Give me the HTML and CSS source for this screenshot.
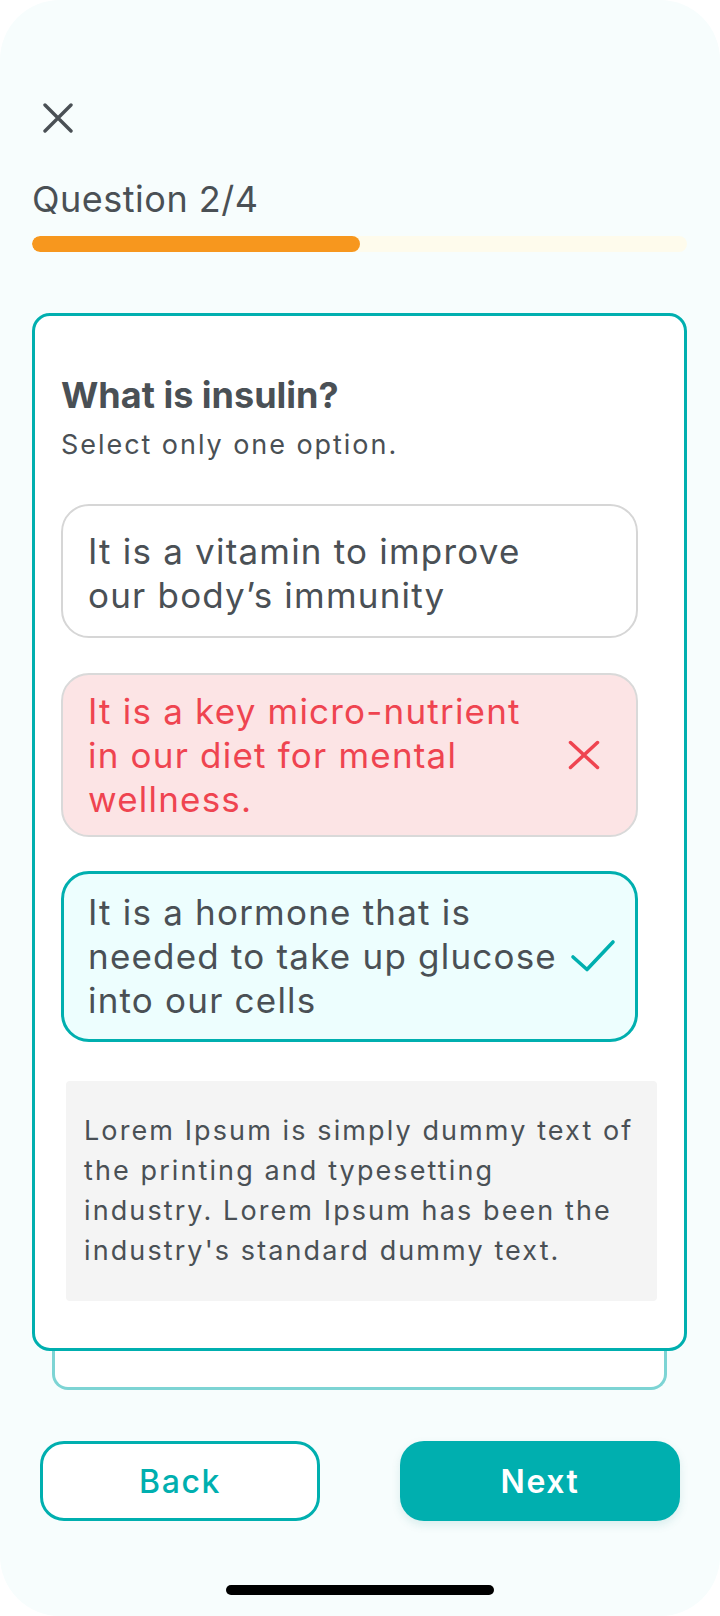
FILE: index.html
```html
<!DOCTYPE html>
<html lang="en">
<head>
<meta charset="utf-8">
<title>Quiz</title>
<link rel="stylesheet" href="styles.css">
</head>
<body>
<div class="phone">
  <button class="close" aria-label="Close">
    <svg width="30" height="30" viewBox="0 0 30 30"><path d="M2 2 L28 28 M28 2 L2 28" stroke="#4a5055" stroke-width="3.4" stroke-linecap="round" fill="none"/></svg>
  </button>
  <div class="qlabel">Question 2/4</div>
  <div class="progress"><div class="progress-fill" style="width:50%"></div></div>

  <div class="card">
    <h1 class="title">What is insulin?</h1>
    <p class="subtitle">Select only one option.</p>

    <div class="option opt-plain">
      <span class="opt-text">It is a vitamin to improve<br>our body’s immunity</span>
    </div>

    <div class="option opt-wrong">
      <span class="opt-text">It is a key micro-nutrient<br>in our diet for mental<br>wellness.</span>
      <svg class="icon-x" width="32" height="30" viewBox="0 0 32 30"><path d="M2.5 2.5 L29.5 27.5 M29.5 2.5 L2.5 27.5" stroke="#ef4450" stroke-width="3.5" stroke-linecap="round" fill="none"/></svg>
    </div>

    <div class="option opt-right">
      <span class="opt-text">It is a hormone that is<br>needed to take up glucose<br>into our cells</span>
      <svg class="icon-check" width="46" height="34" viewBox="0 0 46 34"><path d="M3 18 L17 30.5 L43 3" stroke="#00afaf" stroke-width="3.6" stroke-linecap="round" stroke-linejoin="round" fill="none"/></svg>
    </div>

    <div class="explain">Lorem Ipsum is simply dummy text of<br>the printing and typesetting<br>industry. Lorem Ipsum has been the<br>industry's standard dummy text.</div>
  </div>
  <div class="deck"></div>

  <div class="actions">
    <button class="btn btn-back">Back</button>
    <button class="btn btn-next">Next</button>
  </div>
  <div class="home"></div>
</div>
</body>
</html>
```
FILE: styles.css
```css
* { box-sizing: border-box; }
html, body { margin: 0; padding: 0; background: #ffffff; }
body { font-family: Inter, "Noto Sans", sans-serif; color: #4a5055; }

.phone {
  width: 720px;
  height: 1616px;
  background: #f7fdfd;
  border-radius: 60px;
  padding: 0 33px 0 32px;
  display: flex;
  flex-direction: column;
}

.close {
  margin: 103px 0 0 11px;
  padding: 0;
  border: 0;
  background: none;
  width: 30px;
  height: 30px;
  align-self: flex-start;
  display: block;
}
.close svg { display: block; }

.qlabel {
  margin-top: 44px;
  font-size: 36px;
  line-height: 44px;
  letter-spacing: 0.5px;
  font-weight: 400;
}

.progress {
  margin-top: 15px;
  height: 16px;
  border-radius: 8px;
  background: #fefbec;
  overflow: hidden;
}
.progress-fill {
  height: 100%;
  background: #f7971e;
  border-radius: 8px;
}

.card {
  margin-top: 61px;
  background: #ffffff;
  border: 3px solid #00afaf;
  border-radius: 18px;
  padding: 57px 26px 47px 26px;
  position: relative;
  z-index: 1;
}

.title {
  margin: 0;
  font-size: 36px;
  line-height: 44px;
  font-weight: 700;
  letter-spacing: 0;
}
.subtitle {
  margin: 12px 0 0 0;
  font-size: 27px;
  line-height: 32px;
  font-weight: 400;
  letter-spacing: 1.95px;
}

.option {
  margin-right: 20px;
  display: flex;
  align-items: center;
  border-radius: 28px;
  font-size: 35px;
  line-height: 44px;
  letter-spacing: 1.2px;
}
.opt-text { flex: 1; white-space: nowrap; }

.opt-plain {
  margin-top: 43px;
  border: 2px solid #d6d6d6;
  background: #ffffff;
  padding: 23px 20px 19px 25px;
}
.opt-wrong {
  margin-top: 35px;
  border: 2px solid #d9d9d9;
  background: #fce4e5;
  color: #ef4450;
  padding: 14px 36px 14px 25px;
}
.opt-right {
  margin-top: 34px;
  border: 3.5px solid #00afaf;
  background: #edfefe;
  padding: 16px 19px 17px 24px;
}
.icon-x, .icon-check { flex: none; display: block; }

.explain {
  margin: 39px 1px 0 5px;
  background: #f4f4f4;
  border-radius: 4px;
  padding: 30px 8px 30px 18px;
  font-size: 27px;
  line-height: 40px;
  letter-spacing: 2.1px;
  white-space: nowrap;
}

.deck {
  height: 39px;
  margin: 0 20px;
  border: 3px solid #7dd4d4;
  border-top: 0;
  border-radius: 0 0 16px 16px;
  background: #ffffff;
}

.actions {
  margin-top: 51px;
  padding: 0 7px 0 8px;
  display: flex;
  justify-content: space-between;
}
.btn {
  width: 280px;
  height: 80px;
  border-radius: 24px;
  font-family: Inter, "Noto Sans", sans-serif;
  font-size: 32px;
  letter-spacing: 1.6px;
  cursor: pointer;
}
.btn-back {
  background: #ffffff;
  border: 3px solid #00afaf;
  color: #00afaf;
  font-weight: 500;
}
.btn-next {
  background: #00afaf;
  border: 0;
  color: #ffffff;
  font-weight: 600;
  box-shadow: 0 4px 10px rgba(0, 120, 120, 0.12);
}

.home {
  margin-top: 64px;
  align-self: center;
  width: 268px;
  height: 10px;
  border-radius: 5px;
  background: #000000;
}
```
